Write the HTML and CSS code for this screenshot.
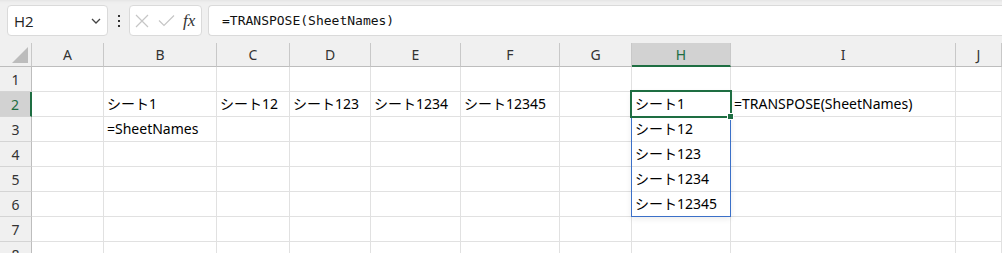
FILE: index.html
```html
<!DOCTYPE html>
<html lang="ja">
<head>
<meta charset="utf-8">
<title>TRANSPOSE</title>
<link rel="stylesheet" href="styles.css">
</head>
<body>
<div class="toolbar">
  <div class="namebox">
    <span class="name">H2</span>
    <svg class="chev" width="10" height="6" viewBox="0 0 10 6"><path d="M1 1 L5 5 L9 1" fill="none" stroke="#444" stroke-width="1.3"/></svg>
  </div>
  <div class="dots"><i></i><i></i><i></i></div>
  <div class="fnbox">
    <svg class="ico" width="14" height="14" viewBox="0 0 14 14"><path d="M1 1 L13 13 M13 1 L1 13" stroke="#c6c6c6" stroke-width="1.2" fill="none"/></svg>
    <svg class="ico" width="17" height="13" viewBox="0 0 17 13"><path d="M1 6.5 L6 11.5 L16 1.5" stroke="#c6c6c6" stroke-width="1.2" fill="none"/></svg>
    <span class="fx">fx</span>
  </div>
  <div class="formula">=TRANSPOSE(SheetNames)</div>
</div>

<div class="sheet">
  <div class="hd corner"><span class="tri"></span></div>
  <div class="hd col">A</div><div class="hd col">B</div><div class="hd col">C</div><div class="hd col">D</div><div class="hd col">E</div><div class="hd col">F</div><div class="hd col">G</div><div class="hd col sel">H</div><div class="hd col">I</div><div class="hd col">J</div>

  <div class="hd row">1</div>
  <div class="c"></div><div class="c"></div><div class="c"></div><div class="c"></div><div class="c"></div><div class="c"></div><div class="c"></div><div class="c"></div><div class="c"></div><div class="c"></div>

  <div class="hd row sel">2</div>
  <div class="c"></div><div class="c">シート1</div><div class="c">シート12</div><div class="c">シート123</div><div class="c">シート1234</div><div class="c">シート12345</div><div class="c"></div><div class="c">シート1</div><div class="c">=TRANSPOSE(SheetNames)</div><div class="c"></div>

  <div class="hd row">3</div>
  <div class="c"></div><div class="c">=SheetNames</div><div class="c"></div><div class="c"></div><div class="c"></div><div class="c"></div><div class="c"></div><div class="c">シート12</div><div class="c"></div><div class="c"></div>

  <div class="hd row">4</div>
  <div class="c"></div><div class="c"></div><div class="c"></div><div class="c"></div><div class="c"></div><div class="c"></div><div class="c"></div><div class="c">シート123</div><div class="c"></div><div class="c"></div>

  <div class="hd row">5</div>
  <div class="c"></div><div class="c"></div><div class="c"></div><div class="c"></div><div class="c"></div><div class="c"></div><div class="c"></div><div class="c">シート1234</div><div class="c"></div><div class="c"></div>

  <div class="hd row">6</div>
  <div class="c"></div><div class="c"></div><div class="c"></div><div class="c"></div><div class="c"></div><div class="c"></div><div class="c"></div><div class="c">シート12345</div><div class="c"></div><div class="c"></div>

  <div class="hd row">7</div>
  <div class="c"></div><div class="c"></div><div class="c"></div><div class="c"></div><div class="c"></div><div class="c"></div><div class="c"></div><div class="c"></div><div class="c"></div><div class="c"></div>

  <div class="hd row">8</div>
  <div class="c"></div><div class="c"></div><div class="c"></div><div class="c"></div><div class="c"></div><div class="c"></div><div class="c"></div><div class="c"></div><div class="c"></div><div class="c"></div>

  <div class="spill"></div>
  <div class="active"><span class="handle"></span></div>
</div>
</body>
</html>
```

FILE: styles.css
```css
* { box-sizing: border-box; }

html, body {
  margin: 0;
  padding: 0;
  background: #ffffff;
  overflow: hidden;
}

body {
  font-family: "Noto Sans", "Noto Sans CJK JP", sans-serif;
  color: #000;
}

.toolbar {
  height: 43px;
  background: #f0f0f0;
  display: flex;
  align-items: flex-start;
  padding: 5px 0 0 7px;
  box-shadow: inset 0 4px 3px -3px #e2e2e2;
}

.namebox {
  width: 101px;
  height: 31px;
  background: #fff;
  border: 1px solid #dadada;
  border-radius: 4px;
  display: flex;
  align-items: center;
  justify-content: space-between;
  padding: 0 6px 0 6px;
}

.name {
  font-family: "Open Sans", "Noto Sans", sans-serif;
  font-size: 15px;
  color: #222;
}

.chev { margin-top: 1px; }

.dots {
  width: 21px;
  height: 31px;
  display: flex;
  flex-direction: column;
  align-items: center;
  justify-content: center;
  gap: 3px;
}
.dots i {
  display: block;
  width: 2px;
  height: 2px;
  background: #333;
}

.fnbox {
  width: 73px;
  height: 31px;
  background: #fff;
  border: 1px solid #dadada;
  border-radius: 4px;
  display: flex;
  align-items: center;
  padding: 0 0 0 5px;
  gap: 9px;
}

.fx {
  font-family: "Liberation Serif", "DejaVu Serif", serif;
  font-style: italic;
  font-size: 17px;
  color: #333;
  margin-left: -1px;
  line-height: 1;
}

.formula {
  flex: 1;
  margin-left: 6px;
  height: 31px;
  background: #fff;
  border: 1px solid #dadada;
  border-right: 0;
  border-radius: 4px 0 0 4px;
  display: flex;
  align-items: center;
  padding-left: 13px;
  font-family: "DejaVu Sans Mono", "Liberation Mono", monospace;
  font-size: 13px;
  color: #111;
}

.sheet {
  position: relative;
  display: grid;
  grid-template-columns: 32px 72px 113px 73px 81px 90px 99px 72px 99px 225px 1fr;
  grid-template-rows: 24px repeat(8, 25px);
  font-size: 14px;
}

.hd {
  background: #f0f0f0;
  color: #333;
  display: flex;
  align-items: center;
  justify-content: center;
  font-family: "Noto Sans", "Open Sans", sans-serif;
  font-size: 14px;
}

.hd.col {
  border-right: 1px solid #c8c8c8;
  border-bottom: 1px solid #bdbdbd;
}

.hd.row {
  border-right: 1px solid #bdbdbd;
  border-bottom: 1px solid #d4d4d4;
  padding-top: 1px;
}

.hd.corner {
  border-right: 1px solid #c8c8c8;
  border-bottom: 1px solid #bdbdbd;
  position: relative;
}

.tri {
  position: absolute;
  right: 3px;
  bottom: 3px;
  width: 0;
  height: 0;
  border-left: 16px solid transparent;
  border-bottom: 16px solid #bcbcbc;
}

.hd.col.sel {
  background: #d2d2d2;
  color: #1e6e42;
  border-bottom: 2px solid #1e6e42;
}

.hd.row.sel {
  background: #d2d2d2;
  color: #1e6e42;
  border-right: 2px solid #1e6e42;
}

.c {
  border-right: 1px solid #e1e1e1;
  border-bottom: 1px solid #e1e1e1;
  padding: 0 3px;
  white-space: nowrap;
  display: flex;
  align-items: center;
  line-height: 1;
}

.spill {
  position: absolute;
  left: 631px;
  top: 48px;
  width: 100px;
  height: 126px;
  border: 1px solid #3b70c8;
  box-shadow: 0 2px 6px rgba(0,0,0,0.08);
  pointer-events: none;
}

.active {
  position: absolute;
  left: 630px;
  top: 47px;
  width: 102px;
  height: 28px;
  border: 2px solid #1e6e42;
  pointer-events: none;
}

.handle {
  position: absolute;
  right: -4px;
  bottom: -4px;
  width: 7px;
  height: 7px;
  background: #1e6e42;
  border: 1px solid #fff;
}
```
